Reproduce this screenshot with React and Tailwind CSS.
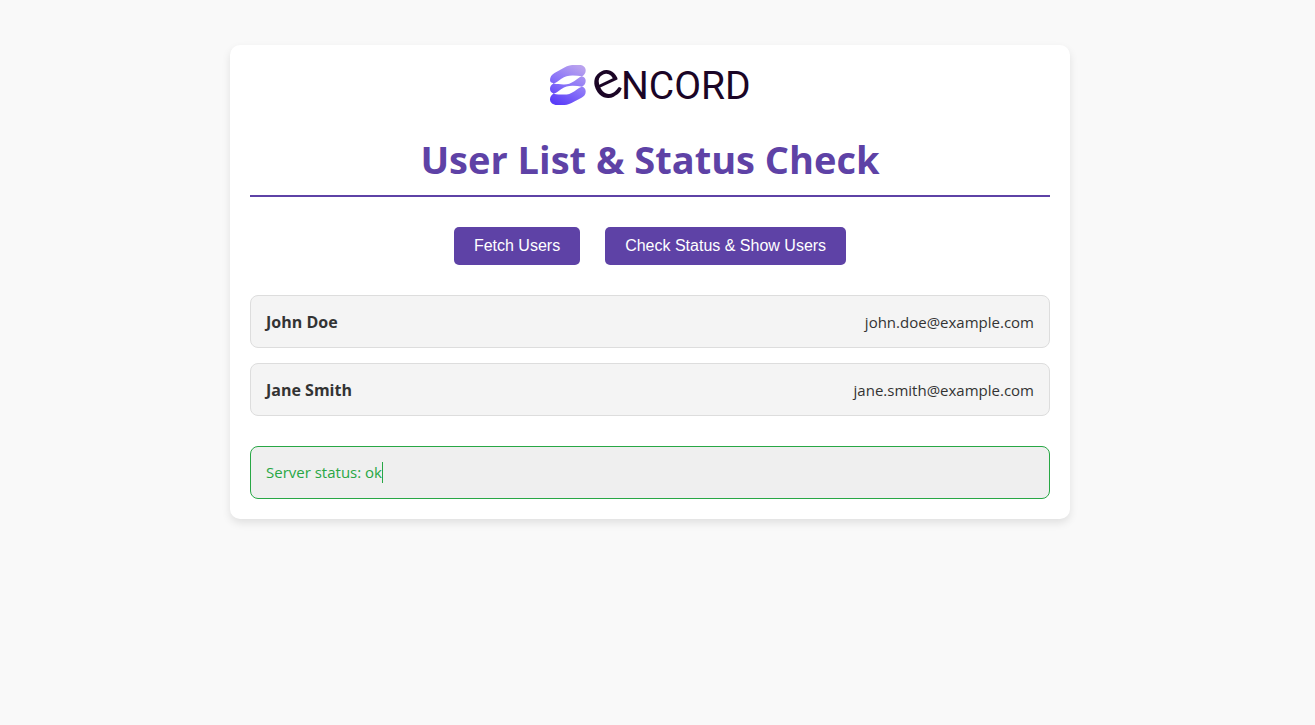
import { useState } from 'react';

const users = [
  { name: 'John Doe', email: 'john.doe@example.com' },
  { name: 'Jane Smith', email: 'jane.smith@example.com' },
];

function Logo() {
  return (
    <svg viewBox="0 0 200 40" className="mx-auto block h-10 w-50 overflow-visible" role="img" aria-label="Encord">
      <defs>
        <linearGradient id="mark" x1="0.75" y1="0" x2="0.25" y2="1">
          <stop offset="0" stopColor="#b9a2ee" />
          <stop offset="0.5" stopColor="#8a74f8" />
          <stop offset="1" stopColor="#5a3df8" />
        </linearGradient>
      </defs>
      <path
        fill="url(#mark)"
        d="M0 15C0 12 1.500 9.800 4.500 8L14 2.700C18 0.500 21 0 25 0H29C33 0 35.700 2 35.700 5.500C35.700 8 34.500 9.800 32 11.400C34.500 11.800 35.700 13.500 35.700 15.800C35.700 18.500 34.500 20.200 32 21.700C34.500 22.200 35.700 24 35.700 26.500C35.700 29.500 34.200 31.300 31.500 32.800L21.500 38C18 39.800 15.500 40 12.500 40H7C3 40 0 37.500 0 34.500C0 32 1 30 3.700 28.500C1.200 27.900 0 26.200 0 24C0 21.500 1 19.800 3.700 18.300C1.200 17.800 0 17 0 15Z"
      />
      <path fill="#fff" d="M3.700 18.500C6.500 17.800 8 16 11 14C15.500 11 18.500 10.300 23 10.400C26 10.500 29 10.700 32 11.300C29 12.200 27.500 14 24.500 16C20.500 18.700 17.500 19.500 13.500 19.400C10 19.300 7 19.100 3.700 18.500Z" />
      <path fill="#fff" d="M3.700 28.700C6.500 28 8 26.200 11 24.300C15.500 21.400 18.500 20.700 23 20.800C26 20.900 29 21.100 32 21.700C29 22.600 27.500 24.300 24.500 26.200C20.500 28.900 17.500 29.700 13.500 29.600C10 29.500 7 29.300 3.700 28.700Z" />
      <g fill="#1b0526">
        <text x="43" y="33" fontSize="54" className="font-['Lato',sans-serif]" transform="rotate(-25 57 20)">e</text>
        <text x="71" y="34" fontSize="39" className="font-['Roboto',sans-serif]">NCORD</text>
      </g>
    </svg>
  );
}

function ActionButton({ children, onClick }) {
  return (
    <button
      type="button"
      onClick={onClick}
      className="cursor-pointer rounded-[5px] bg-[#5e42a6] px-5 py-[10px] font-['Liberation_Sans',Arial,sans-serif] text-base leading-[18px] text-white hover:bg-[#4b3390]"
    >
      {children}
    </button>
  );
}

export default function App() {
  const [list, setList] = useState(users);
  const [status, setStatus] = useState('ok');

  return (
    <div className="min-h-screen bg-[#f9f9f9] pt-[45px] pr-[15px] pb-10 font-['Open_Sans','Segoe_UI',sans-serif] text-[15px] text-[#333]">
      <main className="mx-auto w-full max-w-[840px] rounded-[10px] bg-white p-5 shadow-[0_4px_8px_rgba(0,0,0,0.1)]">
        <Logo />
        <h1 className="mt-7 border-b-2 border-[#5e42a6] pb-[10px] text-center text-[38px] leading-[52px] font-bold text-[#5e42a6]">
          User List &amp; Status Check
        </h1>
        <div className="mt-[30px] flex flex-wrap justify-center gap-[25px]">
          <ActionButton onClick={() => setList(users)}>Fetch Users</ActionButton>
          <ActionButton
            onClick={() => {
              setStatus('ok');
              setList(users);
            }}
          >
            Check Status &amp; Show Users
          </ActionButton>
        </div>
        <ul className="mt-[30px] flex flex-col gap-[15px]">
          {list.map((user) => (
            <li
              key={user.email}
              className="flex items-center justify-between rounded-lg border border-[#ddd] bg-[#f4f4f4] px-[15px] pt-4 pb-[14px] leading-[21px]"
            >
              <strong className="text-base leading-[21px] font-bold">{user.name}</strong>
              <span>{user.email}</span>
            </li>
          ))}
        </ul>
        <div
          role="status"
          className="mt-[30px] flex rounded-lg border border-[#28a745] bg-[#efefef] p-[15px] leading-[21px] text-[#28a745]"
        >
          <span className="border-r border-[#28a745]">Server status: {status}</span>
        </div>
      </main>
    </div>
  );
}
